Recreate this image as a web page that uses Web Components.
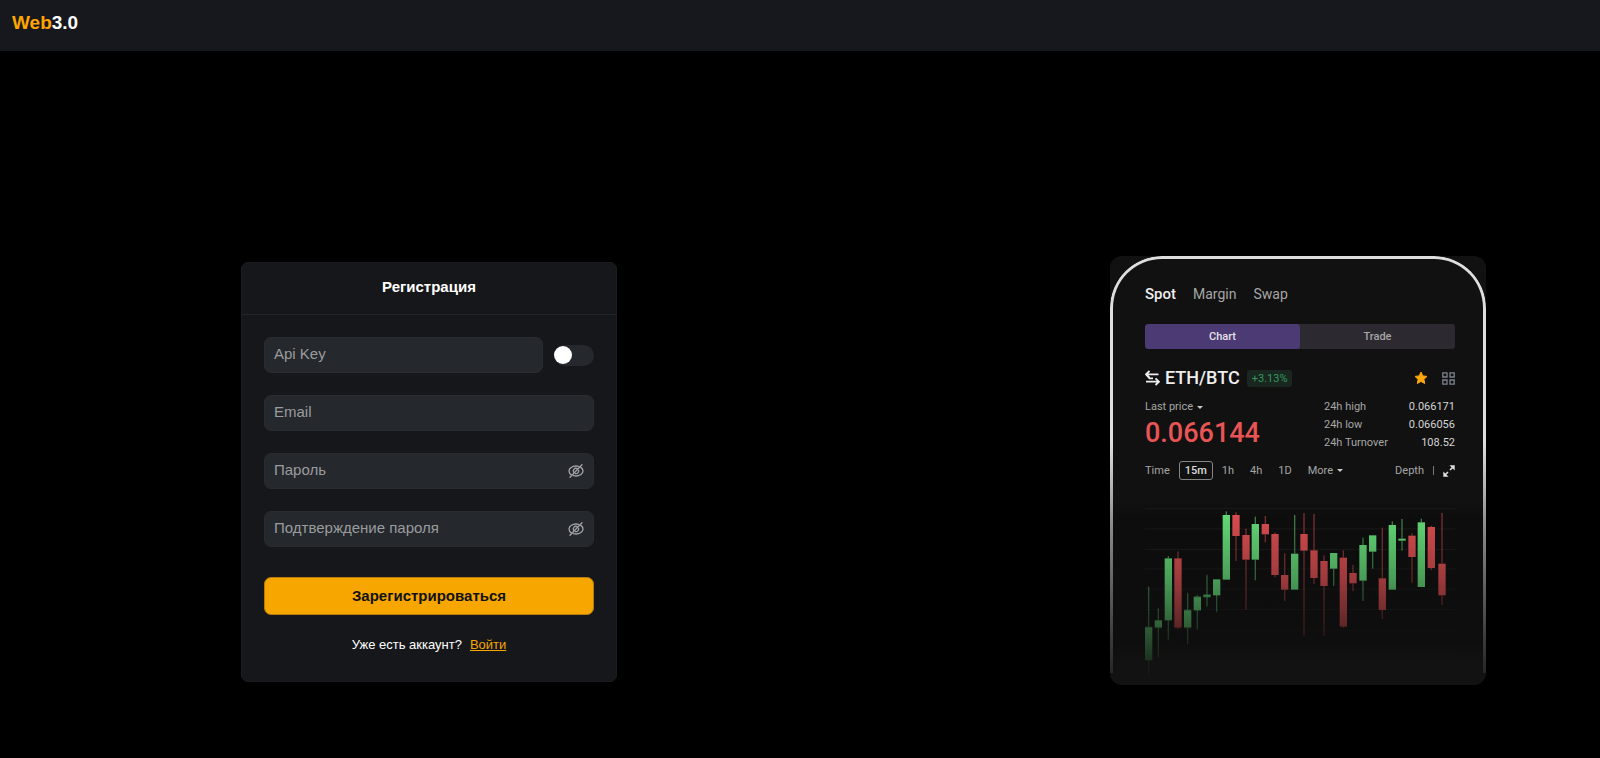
<!DOCTYPE html>
<html lang="ru">
<head>
<meta charset="UTF-8">
<meta name="viewport" content="width=device-width, initial-scale=1">
<title>Web3.0</title>
<style>
  body {
    margin: 0;
    min-height: 100vh;
    background: #000;
    color: #fff;
    font-family: "Liberation Sans", Arial, sans-serif;
  }

  main {
    display: grid;
    grid-template-columns: 241fr minmax(340px, 376fr) 493fr minmax(340px, 376fr) 114fr;
    align-items: start;
    padding: 205px 0 64px;
  }

  register-card { grid-column: 2; margin-top: 6px; }
  market-preview { grid-column: 4; }
</style>
</head>
<body>
<site-header><span slot="accent">Web</span>3.0</site-header>
<main>
  <register-card>
    <span slot="title">Регистрация</span>
  </register-card>
  <market-preview pair="ETH/BTC" change="+3.13%" price="0.066144"></market-preview>
</main>

<script>
function makeTemplate(html) {
  const template = document.createElement('template');
  template.innerHTML = html;
  return template;
}

// ---- Header ----
const headerTemplate = makeTemplate(`
  <style>
    :host {
      display: block;
      background: #17181e;
    }
    header {
      padding: 12px 12px 17px;
    }
    a {
      color: #fff;
      font-size: 19px;
      font-weight: bold;
      line-height: 22px;
      text-decoration: none;
      display: block;
      width: max-content;
    }
    ::slotted(span) { color: #ffa500; }
  </style>
  <header><a href="#"><slot name="accent"></slot><slot></slot></a></header>
`);

class SiteHeader extends HTMLElement {
  constructor() {
    super();
    this.attachShadow({ mode: 'open' });
    this.shadowRoot.appendChild(headerTemplate.content.cloneNode(true));
  }
}

customElements.define('site-header', SiteHeader);

// ---- Text field ----
const fieldTemplate = makeTemplate(`
  <style>
    :host { display: block; }
    .field {
      display: flex;
      align-items: center;
      height: 36px;
      box-sizing: border-box;
      padding: 0 9px;
      border: 1px solid #282b2f;
      border-radius: 7px;
      background: #25282c;
    }
    .field:focus-within { border-color: #f7a600; }
    input {
      flex: 1;
      min-width: 0;
      padding: 0 0 2px;
      border: 0;
      outline: 0;
      background: none;
      color: #fff;
      font: 15px/20px "Liberation Sans", Arial, sans-serif;
    }
    input::placeholder { color: #9a9c9f; opacity: 1; }
    button {
      display: flex;
      padding: 0;
      border: 0;
      background: none;
      color: #a2a4a8;
      cursor: pointer;
    }
    button[hidden] { display: none; }
    svg { width: 16px; height: 16px; }
  </style>
  <div class="field">
    <input>
    <button type="button" aria-label="Показать пароль" hidden>
      <svg viewBox="0 0 16 16" fill="none" stroke="currentColor" stroke-width="1.3" stroke-linecap="round">
        <path d="M3.6 12C2.3 11.2 1 9.8 1 8c0-2.8 3.3-5 7-5 1 0 2 .2 2.9.5"/>
        <path d="M12.8 4.4C14.2 5.3 15 6.6 15 8c0 2.8-3.3 5-7 5-.9 0-1.7-.1-2.5-.4"/>
        <path d="M5.6 9.3A2.7 2.7 0 0 1 9.2 5.6M10.6 7.3A2.7 2.7 0 0 1 7.3 10.6"/>
        <path d="M2 14.3 14 1.8"/>
      </svg>
    </button>
  </div>
`);

class TextField extends HTMLElement {
  constructor() {
    super();
    this.attachShadow({ mode: 'open' });
    this.shadowRoot.appendChild(fieldTemplate.content.cloneNode(true));
    this.input = this.shadowRoot.querySelector('input');
    this.eye = this.shadowRoot.querySelector('button');
  }

  connectedCallback() {
    const label = this.getAttribute('label');
    const type = this.getAttribute('type') || 'text';
    this.input.setAttribute('aria-label', label);
    this.input.placeholder = label;
    this.input.type = type;

    if (type === 'password') {
      this.eye.hidden = false;
      this.eye.addEventListener('click', () => {
        this.input.type = this.input.type === 'password' ? 'text' : 'password';
      });
    }
  }
}

customElements.define('text-field', TextField);

// ---- Toggle ----
const toggleTemplate = makeTemplate(`
  <style>
    :host { display: flex; }
    input {
      appearance: none;
      display: flex;
      align-items: center;
      width: 40px;
      height: 21px;
      margin: 0;
      border-radius: 11px;
      background: #25282c;
      cursor: pointer;
    }
    input::before {
      content: "";
      width: 18px;
      height: 18px;
      border-radius: 50%;
      background: #fff;
      transition: margin 0.2s;
    }
    input:checked { background: #f7a600; }
    input:checked::before { margin-left: 22px; }
  </style>
  <input type="checkbox" role="switch">
`);

class ToggleSwitch extends HTMLElement {
  constructor() {
    super();
    this.attachShadow({ mode: 'open' });
    this.shadowRoot.appendChild(toggleTemplate.content.cloneNode(true));
  }

  connectedCallback() {
    this.shadowRoot.querySelector('input').setAttribute('aria-label', this.getAttribute('label'));
  }
}

customElements.define('toggle-switch', ToggleSwitch);

// ---- Registration card ----
const registerTemplate = makeTemplate(`
  <style>
    :host {
      display: block;
      box-sizing: border-box;
      border: 1px solid #1b1d20;
      border-radius: 7px;
      background: #16171a;
    }
    h1 {
      margin: 0;
      padding: 14px 0 17px;
      border-bottom: 1px solid #222528;
      font-size: 15px;
      line-height: 20px;
      text-align: center;
    }
    form {
      display: flex;
      flex-direction: column;
      gap: 22px;
      padding: 22px 22px 28px;
    }
    .row {
      display: flex;
      align-items: center;
      gap: 11px;
    }
    .row text-field { flex: 1; }
    .submit {
      height: 38px;
      margin-top: 8px;
      padding: 0;
      border: 1px solid #b67c05;
      border-radius: 7px;
      background: #f7a600;
      color: #121214;
      font: bold 15px/20px "Liberation Sans", Arial, sans-serif;
      cursor: pointer;
    }
    p {
      display: flex;
      justify-content: center;
      gap: 8px;
      margin: 0;
      font-size: 13px;
      line-height: 16px;
    }
    a { color: #f7a600; }
  </style>
  <h1><slot name="title"></slot></h1>
  <form>
    <div class="row">
      <text-field label="Api Key"></text-field>
      <toggle-switch label="Api Key"></toggle-switch>
    </div>
    <text-field label="Email" type="email"></text-field>
    <text-field label="Пароль" type="password"></text-field>
    <text-field label="Подтверждение пароля" type="password"></text-field>
    <button class="submit" type="submit">Зарегистрироваться</button>
    <p>Уже есть аккаунт? <a href="#login">Войти</a></p>
  </form>
`);

class RegisterCard extends HTMLElement {
  constructor() {
    super();
    this.attachShadow({ mode: 'open' });
    this.shadowRoot.appendChild(registerTemplate.content.cloneNode(true));
    this.shadowRoot.querySelector('form').addEventListener('submit', (e) => {
      e.preventDefault();
    });
  }
}

customElements.define('register-card', RegisterCard);

// ---- Candle chart ----
// center x, high, body top, body bottom, low, direction
const candles = [
  [56, 290, 411, 511, 565, 'up'],
  [85, 355, 391, 413, 502, 'up'],
  [115, 198, 205, 391, 450, 'up'],
  [144, 184, 205, 413, 418, 'down'],
  [173, 309, 360, 413, 462, 'up'],
  [202, 315, 320, 361, 418, 'up'],
  [231, 255, 314, 321, 350, 'up'],
  [260, 268, 268, 316, 366, 'up'],
  [289, 64, 75, 269, 269, 'up'],
  [318, 67, 75, 138, 213, 'down'],
  [348, 116, 135, 209, 360, 'down'],
  [376, 80, 102, 209, 271, 'up'],
  [406, 78, 102, 133, 157, 'down'],
  [435, 127, 132, 255, 262, 'down'],
  [464, 190, 255, 299, 333, 'down'],
  [494, 75, 191, 299, 299, 'up'],
  [522, 69, 132, 182, 438, 'down'],
  [552, 72, 181, 264, 282, 'down'],
  [582, 196, 213, 288, 438, 'down'],
  [611, 189, 189, 236, 288, 'up'],
  [640, 181, 203, 410, 414, 'down'],
  [669, 225, 249, 280, 303, 'down'],
  [699, 143, 165, 272, 333, 'up'],
  [728, 136, 136, 185, 236, 'up'],
  [757, 113, 265, 360, 387, 'down'],
  [787, 94, 105, 299, 299, 'up'],
  [816, 87, 146, 152, 182, 'up'],
  [846, 130, 137, 201, 278, 'down'],
  [874, 86, 97, 291, 291, 'up'],
  [904, 107, 111, 234, 240, 'down'],
  [936, 69, 221, 316, 345, 'down']
];
const gridLines = [55, 116, 178, 236, 297, 358, 420, 480];

const chartTemplate = makeTemplate(`
  <style>
    :host { display: block; }
    svg { display: block; width: 100%; }
    .up { fill: #64dc78; }
    .down { fill: #dc4e51; }
    .wick { opacity: 0.55; }
    .grid { fill: #191919; }
  </style>
  <svg viewBox="45 30 930 555" role="img" aria-label="Candlestick chart">
    <defs>
      <linearGradient id="fade" gradientUnits="userSpaceOnUse" x1="0" y1="60" x2="0" y2="570">
        <stop offset="0" stop-color="#fff"/>
        <stop offset="0.4" stop-color="#fff" stop-opacity="0.7"/>
        <stop offset="0.75" stop-color="#fff" stop-opacity="0.32"/>
        <stop offset="1" stop-color="#fff" stop-opacity="0.02"/>
      </linearGradient>
      <mask id="mask" maskUnits="userSpaceOnUse" x="45" y="30" width="930" height="555">
        <rect x="45" y="30" width="930" height="555" fill="url(#fade)"/>
      </mask>
    </defs>
    <g mask="url(#mask)"></g>
  </svg>
`);

class CandleChart extends HTMLElement {
  constructor() {
    super();
    this.attachShadow({ mode: 'open' });
    this.shadowRoot.appendChild(chartTemplate.content.cloneNode(true));
    this.group = this.shadowRoot.querySelector('g');
    this.draw();
  }

  rect(x, y, width, height, className) {
    const rect = document.createElementNS('http://www.w3.org/2000/svg', 'rect');
    rect.setAttribute('x', x);
    rect.setAttribute('y', y);
    rect.setAttribute('width', width);
    rect.setAttribute('height', height);
    rect.setAttribute('class', className);
    this.group.appendChild(rect);
  }

  draw() {
    gridLines.forEach(y => this.rect(45, y - 1, 930, 3, 'grid'));
    candles.forEach(([x, high, top, bottom, low, direction]) => {
      this.rect(x - 2, high, 4, top - high, `wick ${direction}`);
      this.rect(x - 2, bottom, 4, low - bottom, `wick ${direction}`);
      this.rect(x - 11, top, 22, bottom - top, direction);
    });
  }
}

customElements.define('candle-chart', CandleChart);

// ---- Market preview ----
const marketTemplate = makeTemplate(`
  <style>
    :host {
      display: block;
      position: relative;
      box-sizing: border-box;
      padding: 28px 31px 0 35px;
      border-radius: 12px;
      overflow: hidden;
      background: linear-gradient(#111 57%, #0d0d0d 61%, #0e0e0e 90%, #121212 95%);
      color: #a6a6a6;
      font-family: Roboto, sans-serif;
      font-size: 11px;
      line-height: 18px;
    }
    .frame {
      position: absolute;
      inset: 0 0 12px;
      border: 3px solid #dedede;
      border-bottom: 0;
      border-radius: 52px 52px 0 0;
      pointer-events: none;
      mask-image: linear-gradient(#000 45%, rgba(0, 0, 0, 0.6) 65%, rgba(0, 0, 0, 0.1));
    }
    button {
      padding: 0;
      border: 0;
      background: none;
      color: inherit;
      font: inherit;
      cursor: pointer;
    }
    svg { display: block; }
    .markets {
      display: flex;
      align-items: center;
      gap: 17px;
      height: 20px;
      font-size: 14px;
    }
    .markets .active {
      color: #eee;
      font-size: 15px;
      font-weight: 500;
    }
    .tabs {
      display: grid;
      grid-template-columns: 1fr 1fr;
      height: 25px;
      margin-top: 20px;
      border-radius: 3px;
      overflow: hidden;
      background: #2d2930;
      font-weight: 500;
    }
    .tabs .active {
      border-radius: 3px;
      background: #4b3a74;
      color: #e4e1ea;
    }
    .pair {
      display: flex;
      align-items: center;
      height: 20px;
      margin-top: 19px;
    }
    h2 {
      margin: 0 7px 0 5px;
      color: #eee;
      font-size: 18px;
      font-weight: 500;
    }
    .swap { color: #eee; }
    .badge {
      padding: 0 5px;
      border-radius: 3px;
      background: #1a2620;
      color: #32995a;
      line-height: 17px;
    }
    .star { margin-left: auto; color: #ffa60a; }
    .layout { margin-left: 14px; color: #7b838f; }
    .quote {
      display: flex;
      justify-content: space-between;
      margin-top: 10px;
    }
    .last { display: flex; align-items: center; gap: 4px; }
    .caret {
      width: 0;
      border: 3px solid transparent;
      border-top-color: #ccc;
      border-bottom: 0;
    }
    .price {
      color: #e95555;
      font-size: 27px;
      font-weight: 500;
      line-height: 34px;
    }
    table {
      width: 131px;
      border-collapse: collapse;
    }
    th, td { padding: 0; height: 18px; }
    th { font-weight: 400; text-align: left; }
    td { color: #d4d4d4; text-align: right; }
    .times {
      display: flex;
      align-items: center;
      gap: 16px;
      height: 19px;
      margin-top: 9px;
    }
    .times .active {
      height: 19px;
      margin: 0 -7px;
      padding: 0 5px;
      border: 1px solid #858585;
      border-radius: 3px;
      color: #ddd;
      font-weight: 500;
      line-height: 17px;
    }
    .more { display: flex; align-items: center; gap: 4px; }
    .depth {
      display: flex;
      align-items: center;
      gap: 9px;
      margin-left: auto;
    }
    .bar { width: 1px; height: 9px; background: #777; }
    .expand { color: #ddd; }
    candle-chart { margin-top: 20px; }
  </style>
  <nav class="markets">
    <button class="active">Spot</button>
    <button>Margin</button>
    <button>Swap</button>
  </nav>
  <div class="tabs">
    <button class="active">Chart</button>
    <button>Trade</button>
  </div>
  <div class="pair">
    <button class="swap" aria-label="Switch pair">
      <svg width="15" height="16" viewBox="0 0 15 16" fill="none" stroke="currentColor" stroke-width="1.8">
        <path d="M4.500 1 1 4.300 4.500 7.600M1 4.300H13.500"/>
        <path d="M10.500 8.400 14 11.700 10.500 15M14 11.700H1"/>
        <path d="M1.200 4.500 4.500 8.300H8"/>
      </svg>
    </button>
    <h2></h2>
    <span class="badge"></span>
    <button class="star" aria-label="Favorite">
      <svg width="14" height="14" viewBox="0 0 14 14" fill="currentColor" stroke="currentColor" stroke-linejoin="round">
        <path d="M7 1l1.800 3.900 4.200.5-3.100 2.900.8 4.200L7 10.400l-3.700 2.100.8-4.200L1 5.400l4.200-.5z"/>
      </svg>
    </button>
    <button class="layout" aria-label="Layout">
      <svg width="13" height="13" viewBox="0 0 13 13" fill="none" stroke="currentColor" stroke-width="1.3">
        <path d="M.8.8h4.200v4.200H.8zM8 .8h4.200v4.200H8zM.8 8h4.200v4.200H.8zM8 8h4.200v4.200H8z"/>
      </svg>
    </button>
  </div>
  <div class="quote">
    <div>
      <button class="last">Last price <i class="caret"></i></button>
      <div class="price"></div>
    </div>
    <table>
      <tr><th>24h high</th><td>0.066171</td></tr>
      <tr><th>24h low</th><td>0.066056</td></tr>
      <tr><th>24h Turnover</th><td>108.52</td></tr>
    </table>
  </div>
  <div class="times">
    <button>Time</button>
    <button class="active">15m</button>
    <button>1h</button>
    <button>4h</button>
    <button>1D</button>
    <button class="more">More <i class="caret"></i></button>
    <div class="depth">
      <button>Depth</button>
      <i class="bar"></i>
      <button class="expand" aria-label="Expand">
        <svg width="12" height="12" viewBox="0 0 12 12" fill="none" stroke="currentColor" stroke-width="1.6">
          <path d="M7 5l3.500-3.500M5 7l-3.500 3.500"/>
          <path d="M6.500.3h5.200v5.200zM.3 6.500v5.200h5.200z" fill="currentColor" stroke="none"/>
        </svg>
      </button>
    </div>
  </div>
  <candle-chart></candle-chart>
  <div class="frame"></div>
`);

class MarketPreview extends HTMLElement {
  constructor() {
    super();
    this.attachShadow({ mode: 'open' });
    this.shadowRoot.appendChild(marketTemplate.content.cloneNode(true));
  }

  connectedCallback() {
    this.shadowRoot.querySelector('h2').textContent = this.getAttribute('pair');
    this.shadowRoot.querySelector('.badge').textContent = this.getAttribute('change');
    this.shadowRoot.querySelector('.price').textContent = this.getAttribute('price');
  }
}

customElements.define('market-preview', MarketPreview);
</script>
</body>
</html>
